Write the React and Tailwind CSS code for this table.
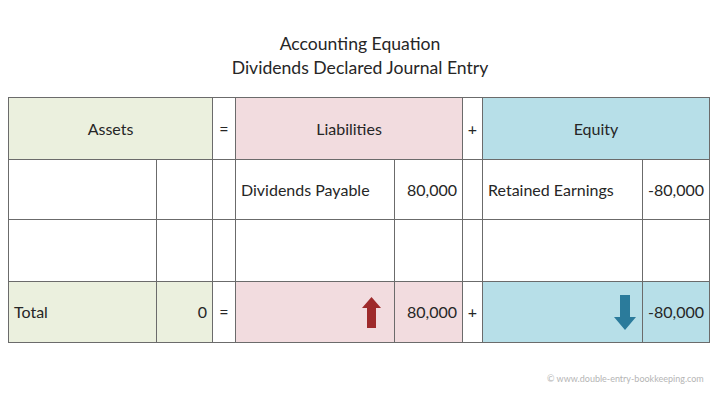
import React from "react";

const F = { fontFamily: "Lato, 'Open Sans', sans-serif" };

function Cell({ className = "", children }) {
  return <div className={"flex items-center px-[5px] text-[16px] text-[#262626] " + className}>{children}</div>;
}

function UpArrow() {
  return (
    <svg width="19" height="31" viewBox="0 0 19 31">
      <path d="M9.5 0 L19 11 L14 11 L14 31 L5 31 L5 11 L0 11 Z" fill="#9e2a2b" />
    </svg>
  );
}

function DownArrow() {
  return (
    <svg width="22" height="35" viewBox="0 0 22 35">
      <path d="M6 0 L16 0 L16 22 L22 22 L11 35 L0 22 L6 22 Z" fill="#2b7b9b" />
    </svg>
  );
}

export default function App() {
  return (
    <div className="w-[720px] h-[404px] bg-white relative overflow-hidden" style={F}>
      <div className="pt-[32px] flex flex-col items-center text-[17.6px] leading-[24px] text-[#262626]">
        <div>Accounting Equation</div>
        <div>Dividends Declared Journal Entry</div>
      </div>
      <div className="ml-[8px] mt-[17px] w-[702px] grid grid-cols-[147px_55px_22px_158px_67px_19px_159px_66px] grid-rows-[61px_59px_61px_60px] gap-px p-px bg-[#6b6b6b]">
        <Cell className="col-span-2 justify-center bg-[#ebf0de]">Assets</Cell>
        <Cell className="justify-center bg-white px-0">=</Cell>
        <Cell className="col-span-2 justify-center bg-[#f2dcdf]">Liabilities</Cell>
        <Cell className="justify-center bg-white px-0">+</Cell>
        <Cell className="col-span-2 justify-center bg-[#b7dfe8]">Equity</Cell>

        <Cell className="bg-white"></Cell>
        <Cell className="bg-white"></Cell>
        <Cell className="bg-white"></Cell>
        <Cell className="bg-white">Dividends Payable</Cell>
        <Cell className="bg-white justify-end">80,000</Cell>
        <Cell className="bg-white"></Cell>
        <Cell className="bg-white">Retained Earnings</Cell>
        <Cell className="bg-white justify-end">-80,000</Cell>

        <Cell className="bg-white"></Cell>
        <Cell className="bg-white"></Cell>
        <Cell className="bg-white"></Cell>
        <Cell className="bg-white"></Cell>
        <Cell className="bg-white"></Cell>
        <Cell className="bg-white"></Cell>
        <Cell className="bg-white"></Cell>
        <Cell className="bg-white"></Cell>

        <Cell className="bg-[#ebf0de]">Total</Cell>
        <Cell className="bg-[#ebf0de] justify-end">0</Cell>
        <Cell className="justify-center bg-white px-0">=</Cell>
        <Cell className="bg-[#f2dcdf] justify-end pr-[13px]"><UpArrow /></Cell>
        <Cell className="bg-[#f2dcdf] justify-end">80,000</Cell>
        <Cell className="justify-center bg-white px-0">+</Cell>
        <Cell className="bg-[#b7dfe8] justify-end pr-[6px]"><DownArrow /></Cell>
        <Cell className="bg-[#b7dfe8] justify-end">-80,000</Cell>
      </div>
      <div className="absolute left-[547px] top-[372px] text-[9px] text-[#b5b5b5]">© www.double-entry-bookkeeping.com</div>
    </div>
  );
}
